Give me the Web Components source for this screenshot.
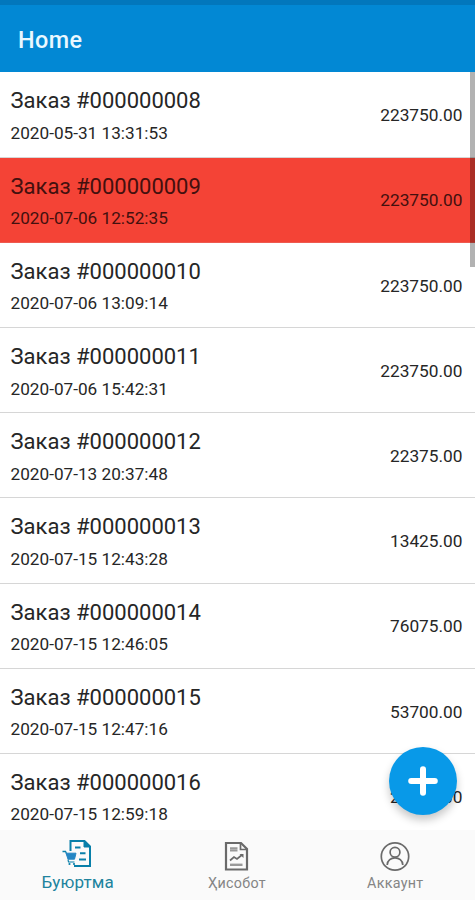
<!DOCTYPE html>
<html lang="uz">
<head>
<meta charset="utf-8">
<title>Home</title>
<style>
body{
	margin:0;
	font-family:Roboto, "Noto Sans", sans-serif;
}
</style>
</head>
<body>
<orders-app></orders-app>
<script>
class AppHeader extends HTMLElement {
  constructor() {
    super()
    this.attachShadow({mode:'open'})
  }
  connectedCallback() {
    this.shadowRoot.innerHTML = `
<div class="status"></div>
<h1><slot></slot></h1>
<style>
:host{
	display:flex;
	flex-direction:column;
	flex:none;
	height:72.4px;
	background:#0288d4;
	color:#e9f8ff;
}
.status{
	flex:none;
	height:5px;
	background:#0277bc;
}
h1{
	margin:0;
	padding:1px 0 0 18px;
	font-size:23.4px;
	line-height:68px;
	font-weight:500;
	letter-spacing:.4px;
}
</style>
    `
  }
}
customElements.define("app-header",AppHeader)

class OrderItem extends HTMLElement {
  constructor() {
    super()
    this.attachShadow({mode:'open'})
  }
  connectedCallback() {
    this.shadowRoot.innerHTML = `
<div class="info">
	<span class="title"><slot></slot></span>
	<span class="date"><slot name="date"></slot></span>
</div>
<span class="sum"><slot name="sum"></slot></span>
<style>
:host{
	display:flex;
	justify-content:space-between;
	align-items:center;
	flex:none;
	box-sizing:border-box;
	height:85.2px;
	padding:0 12.5px 0 10.5px;
	border-bottom:1px solid #d6d6d6;
	color:#262626;
}
:host([late]){
	background:#f44336;
	border-bottom-color:#ee5a50;
	color:#43100e;
}
.info{
	display:flex;
	flex-direction:column;
	gap:5.5px;
	padding-top:3.5px;
}
.title{
	font-size:22px;
	line-height:28px;
}
.date{
	font-size:17.2px;
	line-height:24px;
}
.sum{
	font-size:17.3px;
	line-height:24px;
	padding-top:1.5px;
}
</style>
    `
  }
}
customElements.define("order-item",OrderItem)

class AddButton extends HTMLElement {
  constructor() {
    super()
    this.attachShadow({mode:'open'})
  }
  connectedCallback() {
    this.shadowRoot.innerHTML = `
<svg width="30" height="30" viewBox="0 0 30 30" stroke="#fff" stroke-width="6" stroke-linecap="round">
	<path d="M15 3.2v23.6M3.2 15h23.6"/>
</svg>
<style>
:host{
	display:flex;
	align-items:center;
	justify-content:center;
	width:68px;
	height:68px;
	border-radius:50%;
	background:#0899e8;
	box-shadow:0 5px 9px rgba(0,0,0,.22);
}
</style>
    `
  }
}
customElements.define("add-button",AddButton)

const icons = {
  order: `
<path d="M7.500 12V2H21.500l5.500 5.500V27H11" stroke-width="2"/>
<path d="M21 1.500v6.500h6.500z" fill="currentColor" stroke-width="1"/>
<path d="M12 8.500h5.500M17 14.200h5.500M16 20.500h7" stroke-width="2"/>
<path d="M-.500 12.500h3l1.500 3" stroke-width="1.300"/>
<path d="M3 14.200h10l-1.500 6H5z" fill="#2586c4" stroke="#2586c4" stroke-width="1"/>
<path d="M5 20.500l.5 2.500h6" stroke-width="1.200"/>
<circle cx="6.500" cy="25" r="1.100" fill="currentColor" stroke="none"/>
<circle cx="11" cy="25" r="1.100" fill="currentColor" stroke="none"/>`,
  report: `
<path d="M4 3h15l6 6V29.500H4z" stroke-width="2.200"/>
<path d="M18.500 3.500v6H25" stroke-width="1.700"/>
<path d="M8 8.200h7.500M8 10.600h7.500" stroke="#999" stroke-width="2"/>
<path d="M8 20.500l4-3.500 3 2 5.500-4.500" stroke-width="1.700"/>
<path d="M17.500 14h4v4z" fill="currentColor" stroke="none"/>
<path d="M8 24.800h12.500" stroke="#999" stroke-width="2.400"/>`,
  account: `
<circle cx="15" cy="16.500" r="13.700" stroke-width="1.700"/>
<circle cx="15" cy="12.300" r="4.900" stroke-width="1.700"/>
<path d="M7.200 25c.2-9.500 15.400-9.500 15.600 0" stroke-width="1.700"/>`
}

class TabItem extends HTMLElement {
  constructor() {
    super()
    this.attachShadow({mode:'open'})
  }
  connectedCallback() {
    this.shadowRoot.innerHTML = `
<svg width="30" height="31" viewBox="0 0 30 31" fill="none" stroke="currentColor" overflow="visible">${icons[this.getAttribute("icon")]}</svg>
<span><slot></slot></span>
<style>
:host{
	display:flex;
	flex-direction:column;
	align-items:center;
	box-sizing:border-box;
	width:33.33%;
	padding-top:10px;
	padding-right:1px;
	color:#6a6a6a;
}
span{
	padding-top:1px;
	color:#858585;
	font-size:14.3px;
	line-height:23px;
	letter-spacing:.3px;
	white-space:nowrap;
}
:host([active]){
	padding-right:3px;
	padding-top:9px;
	color:#087fa9;
}
:host([active]) span{
	color:#20839d;
	font-size:17px;
	letter-spacing:.1px;
}
</style>
    `
  }
}
customElements.define("tab-item",TabItem)

class OrdersApp extends HTMLElement {
  constructor() {
    super()
    this.attachShadow({mode:'open'})
  }
  getOrders() {
    return [
      ["000000008","2020-05-31 13:31:53","223750.00"],
      ["000000009","2020-07-06 12:52:35","223750.00",true],
      ["000000010","2020-07-06 13:09:14","223750.00"],
      ["000000011","2020-07-06 15:42:31","223750.00"],
      ["000000012","2020-07-13 20:37:48","22375.00"],
      ["000000013","2020-07-15 12:43:28","13425.00"],
      ["000000014","2020-07-15 12:46:05","76075.00"],
      ["000000015","2020-07-15 12:47:16","53700.00"],
      ["000000016","2020-07-15 12:59:18","22375.00"]
    ]
  }
  connectedCallback() {
    const rows = this.getOrders().map(([id,date,sum,late]) => `
	<order-item ${late ? "late" : ""}>Заказ #${id}<span slot="date">${date}</span><span slot="sum">${sum}</span></order-item>`).join("")
    this.shadowRoot.innerHTML = `
<app-header>Home</app-header>
<main>${rows}
	<div class="scroll"></div>
</main>
<add-button></add-button>
<nav>
	<tab-item icon="order" active>Буюртма</tab-item>
	<tab-item icon="report">Ҳисобот</tab-item>
	<tab-item icon="account">Аккаунт</tab-item>
</nav>
<style>
:host{
	display:flex;
	flex-direction:column;
	position:relative;
	height:900px;
	overflow:hidden;
	background:#fff;
}
main{
	display:flex;
	flex-direction:column;
	flex:1;
	min-height:0;
	position:relative;
	overflow:hidden;
}
.scroll{
	position:absolute;
	top:0;
	right:0;
	width:5px;
	height:195px;
	background:rgba(0,0,0,.3);
}
add-button{
	position:absolute;
	right:18px;
	bottom:85px;
}
nav{
	display:flex;
	flex:none;
	height:70px;
	background:#fafafa;
}
</style>
    `
  }
}
customElements.define("orders-app",OrdersApp)
</script>
</body>
</html>
